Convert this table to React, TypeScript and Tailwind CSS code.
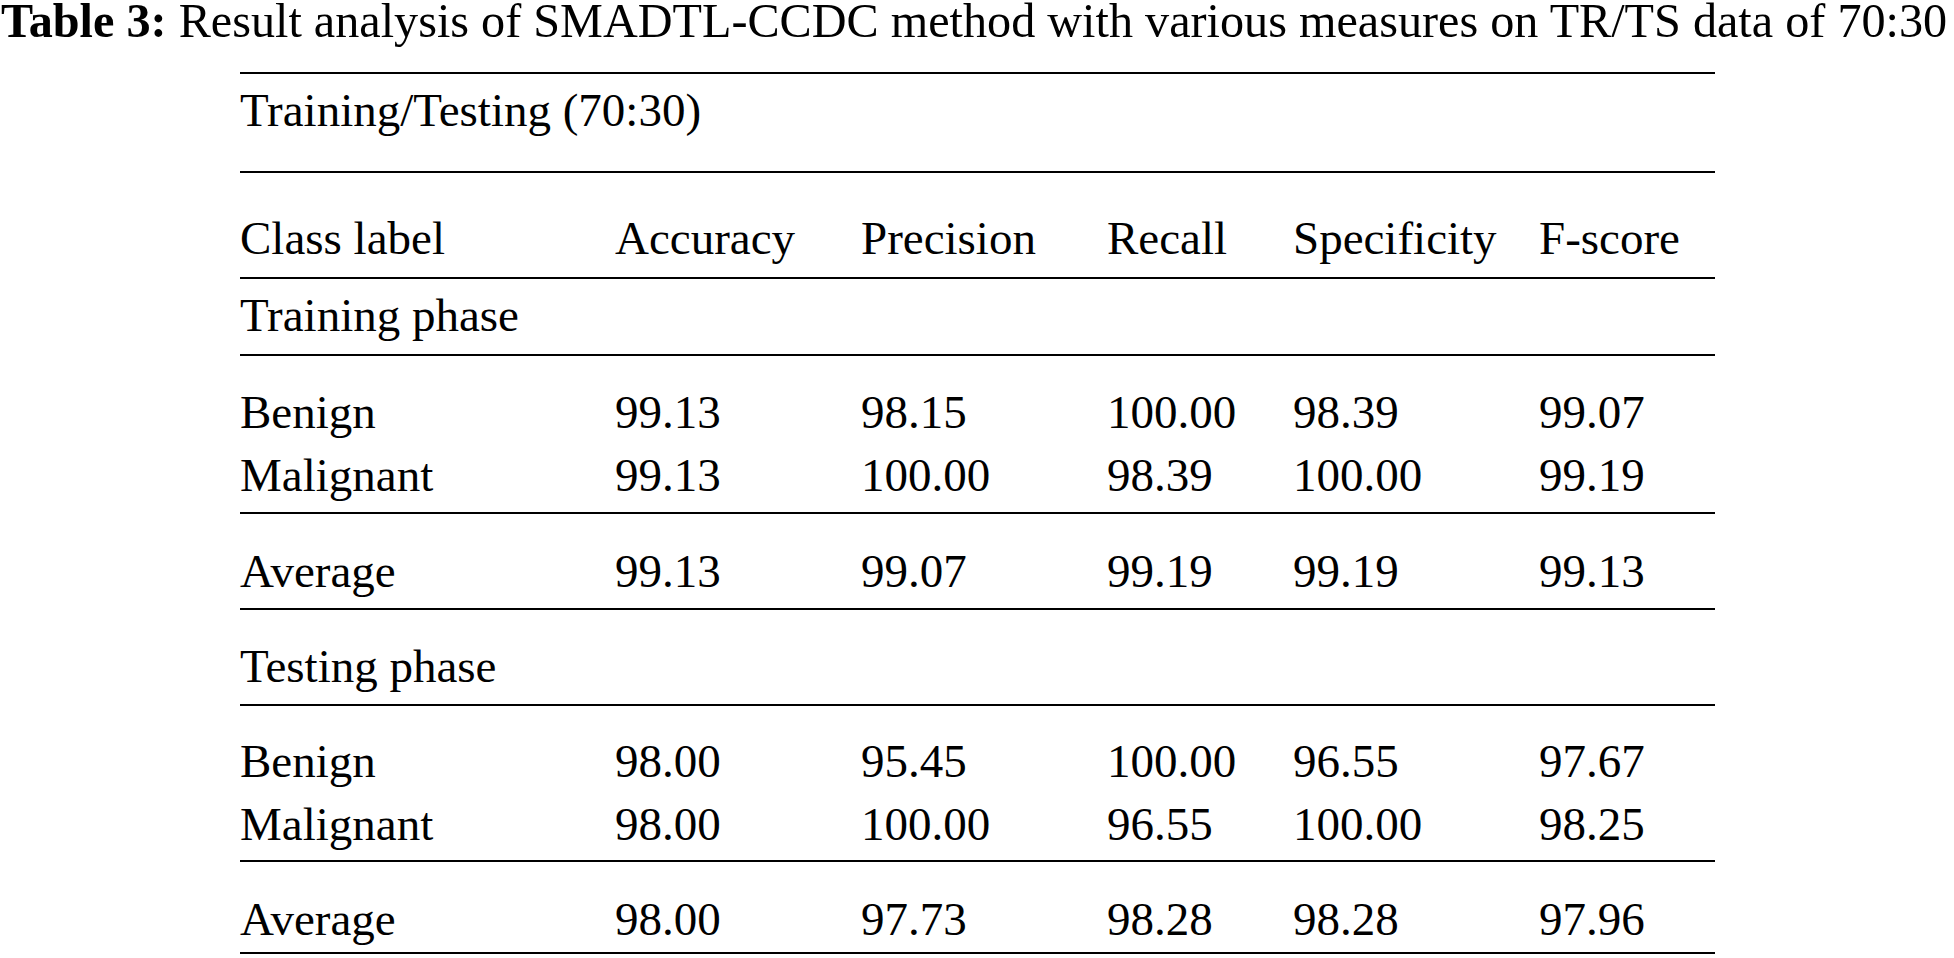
import React from "react";

const cols = "grid grid-cols-[375px_246px_246px_186px_246px_176px]";

function DataRow({ cells }: { cells: string[] }) {
  return (
    <div className={`${cols} h-[63px] leading-[63px] whitespace-nowrap`}>
      {cells.map((c, i) => (
        <div key={i}>{c}</div>
      ))}
    </div>
  );
}

export default function App() {
  return (
    <div className="bg-white text-black w-[1954px] h-[958px] font-['Liberation_Serif','Times_New_Roman',serif]">
      <div className="h-[72px] pl-[1px] text-[48.2px] leading-[42px] whitespace-nowrap">
        <span className="font-bold">Table 3:</span> Result analysis of SMADTL-CCDC method with various measures on TR/TS data of 70:30
      </div>
      <div className="ml-[240px] w-[1475px] text-[47px]">
        <div className="border-t-2 border-black pt-[5px] pb-[29px]">
          <div className="h-[63px] leading-[63px] whitespace-nowrap">Training/Testing (70:30)</div>
        </div>
        <div className="border-t-2 border-black pt-[34px] pb-[7px]">
          <DataRow cells={["Class label", "Accuracy", "Precision", "Recall", "Specificity", "F-score"]} />
        </div>
        <div className="border-t-2 border-black pt-[5px] pb-[7px]">
          <div className="h-[63px] leading-[63px] whitespace-nowrap">Training phase</div>
        </div>
        <div className="border-t-2 border-black pt-[25px] pb-[5px]">
          <DataRow cells={["Benign", "99.13", "98.15", "100.00", "98.39", "99.07"]} />
          <DataRow cells={["Malignant", "99.13", "100.00", "98.39", "100.00", "99.19"]} />
        </div>
        <div className="border-t-2 border-black pt-[26px] pb-[5px]">
          <DataRow cells={["Average", "99.13", "99.07", "99.19", "99.19", "99.13"]} />
        </div>
        <div className="border-t-2 border-black pt-[25px] pb-[6px]">
          <div className="h-[63px] leading-[63px] whitespace-nowrap">Testing phase</div>
        </div>
        <div className="border-t-2 border-black pt-[24px] pb-[4px]">
          <DataRow cells={["Benign", "98.00", "95.45", "100.00", "96.55", "97.67"]} />
          <DataRow cells={["Malignant", "98.00", "100.00", "96.55", "100.00", "98.25"]} />
        </div>
        <div className="border-t-2 border-b-2 border-black pt-[26px] pb-[1px]">
          <DataRow cells={["Average", "98.00", "97.73", "98.28", "98.28", "97.96"]} />
        </div>
      </div>
    </div>
  );
}
